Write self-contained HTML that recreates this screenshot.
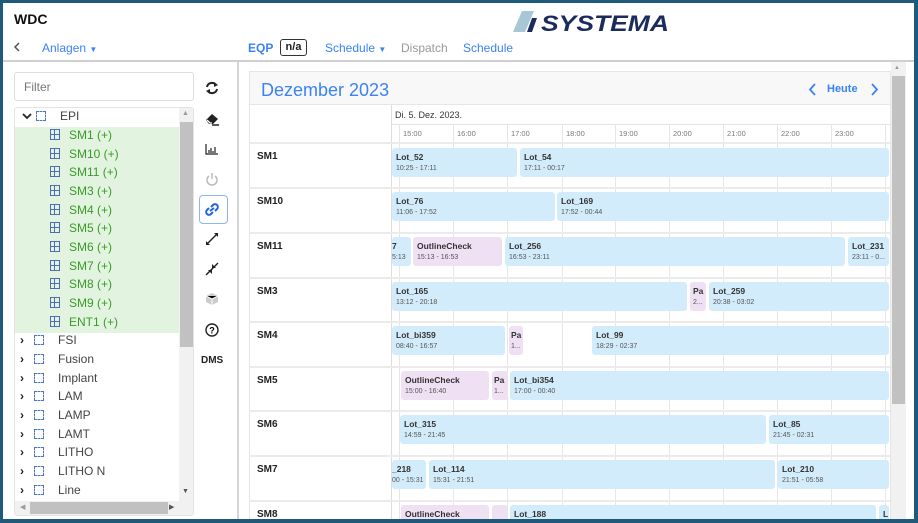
<!DOCTYPE html>
<html><head><meta charset="utf-8"><style>
*{box-sizing:border-box;margin:0;padding:0}
html,body{width:918px;height:523px;overflow:hidden}
body{font-family:"Liberation Sans",sans-serif;background:#fff;position:relative}
.a{position:absolute}
.frame{left:0;top:0;width:918px;height:523px;border:3px solid #1d5a7c;border-width:3px 4px 4px 3px;z-index:50;pointer-events:none}
.nav{font-size:12px;color:#3b82f6}
.tr{position:absolute;left:20px;font-size:12px;color:#444;height:19px;line-height:19px}
.tr .chev{display:inline-block;width:14px;font-weight:bold;color:#222}
.box{display:inline-block;width:10px;height:10px;border:1px dashed #4a78c8;vertical-align:-1px;margin-right:14px}
.g{position:absolute;left:50px;font-size:12px;color:#3a9a2a;height:19px;line-height:19px}
.g i{display:inline-block;width:10px;height:11px;border:1.5px solid #4a6fb8;margin-right:9px;vertical-align:-1px;background:linear-gradient(#4a6fb8,#4a6fb8) 3px 0/1px 100% no-repeat,linear-gradient(#4a6fb8,#4a6fb8) 0 4px/100% 1px no-repeat}
.ic{position:absolute;left:204px}
.b{position:absolute;height:29px;background:#d3ecfb;border-radius:3px;overflow:hidden;white-space:nowrap;padding:4px 0 0 4px}
.b.p{background:#f0e0f3}
.b b{display:block;font-size:8.5px;font-weight:bold;color:#333;line-height:11px}
.b s{display:block;text-decoration:none;font-size:7px;color:#555;line-height:11px}
.rl{position:absolute;left:257px;font-size:10px;font-weight:bold;color:#222}
.hl{position:absolute;top:124px;width:1px;height:395px;background:#e6e6e6}
.hr{position:absolute;left:249px;width:641px;height:2px;background:#ebebeb}
.hx{position:absolute;top:129px;font-size:7.5px;color:#777}
#clip{position:absolute;left:0;top:0;width:918px;height:519px;overflow:hidden}
</style></head><body>
<div id="clip">
<!-- header -->
<div class="a" style="left:14px;top:11px;font-size:14px;font-weight:bold;color:#111">WDC</div>
<svg class="a" style="left:13px;top:42px" width="8" height="10"><path d="M6 1 L2 5 L6 9" stroke="#555" stroke-width="1.5" fill="none"/></svg>
<div class="a nav" style="left:42px;top:41px">Anlagen <span style="font-size:8px">&#9660;</span></div>
<div class="a" style="left:248px;top:41px;font-size:12px;font-weight:bold;color:#3b82f6">EQP</div>
<div class="a" style="left:280px;top:39px;width:27px;height:17px;border:1px solid #333;border-radius:3px;font-size:11px;font-weight:bold;text-align:center;line-height:15px;color:#222">n/a</div>
<div class="a nav" style="left:325px;top:41px">Schedule <span style="font-size:8px">&#9660;</span></div>
<div class="a" style="left:401px;top:41px;font-size:12px;color:#999">Dispatch</div>
<div class="a nav" style="left:463px;top:41px">Schedule</div>
<svg class="a" style="left:513px;top:10px" width="160" height="24"><polygon points="9,1 21,1 12,22 0,22" fill="#a9c6d6"/><polygon points="19,8 24,8 19,22 14,22" fill="#1b2b5c"/><text x="28" y="21" font-family="Liberation Sans" font-weight="bold" font-style="italic" font-size="22" fill="#1b2b5c" textLength="128" lengthAdjust="spacingAndGlyphs">SYSTEMA</text></svg>
<div class="a" style="left:0;top:60px;width:918px;height:2px;background:#cfcfcf"></div>
<!-- left -->
<div class="a" style="left:14px;top:72px;width:180px;height:29px;border:1px solid #ddd;border-radius:3px;font-size:12px;color:#777;padding:7px 9px">Filter</div>
<div class="a" style="left:14px;top:107px;width:180px;height:409px;border:1px solid #e3e3e3;border-radius:3px;overflow:hidden">
<div class="a" style="left:0;top:19px;width:164px;height:206px;background:#e2f4df"></div>
<div class="a" style="left:164px;top:0;width:15px;height:393px;background:#f1f1f1"></div>
<div class="a" style="left:165px;top:14px;width:13px;height:225px;background:#c1c1c1"></div>
<div class="a" style="left:0;top:393px;width:179px;height:15px;background:#f1f1f1"></div>
<div class="a" style="left:15px;top:394px;width:138px;height:12px;background:#c1c1c1"></div>
<div class="a" style="left:167px;top:2px;font-size:7px;color:#999">&#9650;</div>
<div class="a" style="left:167px;top:380px;font-size:7px;color:#555">&#9660;</div>
<div class="a" style="left:5px;top:395px;font-size:7px;color:#999">&#9664;</div>
<div class="a" style="left:154px;top:395px;font-size:7px;color:#555">&#9654;</div>
</div>
<svg class="a" style="left:22px;top:113px" width="10" height="8"><path d="M1 1 L5 5 L9 1" stroke="#222" stroke-width="1.8" fill="none"/></svg>
<div class="tr" style="left:22px;top:107px"><span class="chev"></span><span class="box"></span>EPI</div>
<div class="g" style="top:126px"><i></i>SM1 (+)</div>
<div class="g" style="top:145px"><i></i>SM10 (+)</div>
<div class="g" style="top:163px"><i></i>SM11 (+)</div>
<div class="g" style="top:182px"><i></i>SM3 (+)</div>
<div class="g" style="top:201px"><i></i>SM4 (+)</div>
<div class="g" style="top:219px"><i></i>SM5 (+)</div>
<div class="g" style="top:238px"><i></i>SM6 (+)</div>
<div class="g" style="top:257px"><i></i>SM7 (+)</div>
<div class="g" style="top:275px"><i></i>SM8 (+)</div>
<div class="g" style="top:294px"><i></i>SM9 (+)</div>
<div class="g" style="top:313px"><i></i>ENT1 (+)</div>
<div class="tr" style="top:331px"><span class="chev">&#8250;</span><span class="box"></span>FSI</div>
<div class="tr" style="top:350px"><span class="chev">&#8250;</span><span class="box"></span>Fusion</div>
<div class="tr" style="top:369px"><span class="chev">&#8250;</span><span class="box"></span>Implant</div>
<div class="tr" style="top:387px"><span class="chev">&#8250;</span><span class="box"></span>LAM</div>
<div class="tr" style="top:406px"><span class="chev">&#8250;</span><span class="box"></span>LAMP</div>
<div class="tr" style="top:425px"><span class="chev">&#8250;</span><span class="box"></span>LAMT</div>
<div class="tr" style="top:443px"><span class="chev">&#8250;</span><span class="box"></span>LITHO</div>
<div class="tr" style="top:462px"><span class="chev">&#8250;</span><span class="box"></span>LITHO N</div>
<div class="tr" style="top:481px"><span class="chev">&#8250;</span><span class="box"></span>Line</div>
<!-- icons -->
<svg class="ic" style="top:81px" width="16" height="14"><path d="M3 6 A5 5 0 0 1 12 4 M13 8 A5 5 0 0 1 4 10" stroke="#222" stroke-width="2" fill="none"/><path d="M10 1 L14 4 L10 6Z M6 13 L2 10 L6 8Z" fill="#222"/></svg>
<svg class="ic" style="top:112px" width="16" height="14"><path d="M2 8 L8 2 L14 7 L9 12 L5 12Z" fill="#222"/><path d="M3 8 L6 11 L8 11" stroke="#fff" stroke-width="1.3" fill="none"/><path d="M8 13 L15 13" stroke="#222" stroke-width="1.5"/></svg>
<svg class="ic" style="top:142px" width="16" height="14"><path d="M2 2 V12 H14" stroke="#222" stroke-width="1.2" fill="none"/><path d="M5 11 V8 M7 11 V6 M9 11 V9 M11 11 V5" stroke="#222" stroke-width="1.2"/></svg>
<svg class="ic" style="top:172px" width="16" height="14"><path d="M5 4 A5 5 0 1 0 11 4" stroke="#bbb" stroke-width="1.5" fill="none"/><path d="M8 1 V7" stroke="#bbb" stroke-width="1.5"/></svg>
<div class="a" style="left:199px;top:195px;width:29px;height:29px;border:1px solid #8fb4f5;border-radius:4px"></div>
<svg class="ic" style="top:202px" width="16" height="15"><path d="M7 5 L9 3 A2.5 2.5 0 0 1 13 7 L11 9 M9 10 L7 12 A2.5 2.5 0 0 1 3 8 L5 6 M6 9 L10 6" stroke="#2563eb" stroke-width="2" fill="none"/></svg>
<svg class="ic" style="top:232px" width="16" height="14"><path d="M3 12 L13 2" stroke="#222" stroke-width="1.4"/><path d="M2 13 L2 9 L6 13Z M14 1 L14 5 L10 1Z" fill="#222"/></svg>
<svg class="ic" style="top:262px" width="16" height="14"><path d="M2 13 L14 1" stroke="#222" stroke-width="1.4"/><path d="M7 7 L7 3 L3 7Z M9 7 L9 11 L13 7Z" fill="#222" transform="rotate(90 8 7)"/></svg>
<svg class="ic" style="top:292px" width="16" height="14"><path d="M8 1 L14 4 L14 10 L8 13 L2 10 L2 4Z" fill="#ccc"/><path d="M2 4 L8 7 L14 4 M8 7 V13" stroke="#fff" stroke-width="1"/></svg>
<svg class="ic" style="top:322px" width="16" height="16"><circle cx="8" cy="8" r="6" stroke="#222" stroke-width="1.4" fill="none"/><text x="8" y="11.5" font-size="9" font-weight="bold" text-anchor="middle" font-family="Liberation Sans">?</text></svg>
<div class="a" style="left:201px;top:355px;font-size:10px;font-weight:bold;color:#222">DMS</div>
<div class="a" style="left:237px;top:62px;width:2px;height:461px;background:#d5d5d5"></div>
<!-- right -->
<div class="a" style="left:249px;top:71px;width:642px;height:450px;border:1px solid #e6e6e6;background:#fff"></div>
<div class="a" style="left:250px;top:72px;width:640px;height:33px;background:#f8f8f8;border-bottom:1px solid #e6e6e6"></div>
<div class="a" style="left:261px;top:80px;font-size:18px;color:#3b82f6">Dezember 2023</div>
<svg class="a" style="left:808px;top:83px" width="10" height="13"><path d="M7 1 L2 6.5 L7 12" stroke="#3b82f6" stroke-width="1.8" fill="none"/></svg>
<div class="a" style="left:827px;top:83px;font-size:11px;color:#3b82f6;font-weight:bold">Heute</div>
<svg class="a" style="left:869px;top:83px" width="10" height="13"><path d="M3 1 L8 6.5 L3 12" stroke="#3b82f6" stroke-width="1.8" fill="none"/></svg>
<div class="a" style="left:891px;top:62px;width:15px;height:457px;background:#f1f1f1"></div>
<div class="a" style="left:892px;top:76px;width:13px;height:328px;background:#c1c1c1"></div>
<div class="a" style="left:894px;top:65px;font-size:6px;color:#999">&#9650;</div>
<div class="a" style="left:391px;top:105px;width:1px;height:414px;background:#ddd"></div>
<div class="a" style="left:395px;top:110px;font-size:9px;color:#333">Di. 5. Dez. 2023.</div>
<div class="a" style="left:391px;top:124px;width:499px;height:1px;background:#e3e3e3"></div>
<div class="hl" style="left:399px"></div><div class="hl" style="left:453px"></div><div class="hl" style="left:507px"></div><div class="hl" style="left:562px"></div><div class="hl" style="left:615px"></div><div class="hl" style="left:669px"></div><div class="hl" style="left:723px"></div><div class="hl" style="left:777px"></div><div class="hl" style="left:831px"></div><div class="hl" style="left:885px"></div>
<div class="hx" style="left:403px">15:00</div><div class="hx" style="left:457px">16:00</div><div class="hx" style="left:511px">17:00</div><div class="hx" style="left:566px">18:00</div><div class="hx" style="left:619px">19:00</div><div class="hx" style="left:673px">20:00</div><div class="hx" style="left:727px">21:00</div><div class="hx" style="left:781px">22:00</div><div class="hx" style="left:835px">23:00</div>
<div class="hr" style="top:142px"></div><div class="hr" style="top:187px"></div><div class="hr" style="top:232px"></div><div class="hr" style="top:277px"></div><div class="hr" style="top:321px"></div><div class="hr" style="top:366px"></div><div class="hr" style="top:410px"></div><div class="hr" style="top:455px"></div><div class="hr" style="top:500px"></div>
<div class="rl" style="top:151px">SM1</div><div class="rl" style="top:196px">SM10</div><div class="rl" style="top:241px">SM11</div><div class="rl" style="top:286px">SM3</div><div class="rl" style="top:330px">SM4</div><div class="rl" style="top:375px">SM5</div><div class="rl" style="top:419px">SM6</div><div class="rl" style="top:464px">SM7</div><div class="rl" style="top:509px">SM8</div>
<!-- bars -->
<div class="b" style="left:392px;width:125px;top:148px"><b>Lot_52</b><s>10:25 - 17:11</s></div>
<div class="b" style="left:520px;width:369px;top:148px"><b>Lot_54</b><s>17:11 - 00:17</s></div>
<div class="b" style="left:392px;width:163px;top:192px"><b>Lot_76</b><s>11:06 - 17:52</s></div>
<div class="b" style="left:557px;width:332px;top:192px"><b>Lot_169</b><s>17:52 - 00:44</s></div>
<div class="b" style="left:392px;width:19px;top:237px;padding-left:0"><b>7</b><s>5:13</s></div>
<div class="b p" style="left:413px;width:89px;top:237px"><b>OutlineCheck</b><s>15:13 - 16:53</s></div>
<div class="b" style="left:505px;width:340px;top:237px"><b>Lot_256</b><s>16:53 - 23:11</s></div>
<div class="b" style="left:848px;width:41px;top:237px"><b>Lot_231</b><s>23:11 - 0...</s></div>
<div class="b" style="left:392px;width:295px;top:282px"><b>Lot_165</b><s>13:12 - 20:18</s></div>
<div class="b p" style="left:690px;width:16px;top:282px;padding-left:3px"><b>Pa</b><s>2...</s></div>
<div class="b" style="left:709px;width:180px;top:282px"><b>Lot_259</b><s>20:38 - 03:02</s></div>
<div class="b" style="left:392px;width:113px;top:326px"><b>Lot_bi359</b><s>08:40 - 16:57</s></div>
<div class="b p" style="left:509px;width:14px;top:326px;padding-left:2px"><b>Pa</b><s>1...</s></div>
<div class="b" style="left:592px;width:297px;top:326px"><b>Lot_99</b><s>18:29 - 02:37</s></div>
<div class="b p" style="left:401px;width:88px;top:371px"><b>OutlineCheck</b><s>15:00 - 16:40</s></div>
<div class="b p" style="left:492px;width:16px;top:371px;padding-left:2px"><b>Pa</b><s>1...</s></div>
<div class="b" style="left:510px;width:379px;top:371px"><b>Lot_bi354</b><s>17:00 - 00:40</s></div>
<div class="b" style="left:400px;width:366px;top:415px"><b>Lot_315</b><s>14:59 - 21:45</s></div>
<div class="b" style="left:769px;width:120px;top:415px"><b>Lot_85</b><s>21:45 - 02:31</s></div>
<div class="b" style="left:392px;width:34px;top:460px;padding-left:0"><b>_218</b><s>00 - 15:31</s></div>
<div class="b" style="left:429px;width:346px;top:460px"><b>Lot_114</b><s>15:31 - 21:51</s></div>
<div class="b" style="left:778px;width:111px;top:460px"><b>Lot_210</b><s>21:51 - 05:58</s></div>
<div class="b p" style="left:401px;width:88px;top:505px"><b>OutlineCheck</b></div>
<div class="b p" style="left:492px;width:16px;top:505px"></div>
<div class="b" style="left:510px;width:366px;top:505px"><b>Lot_188</b></div>
<div class="b" style="left:879px;width:10px;top:505px"><b>L</b></div>
</div>
<div class="a frame"></div>
</body></html>
